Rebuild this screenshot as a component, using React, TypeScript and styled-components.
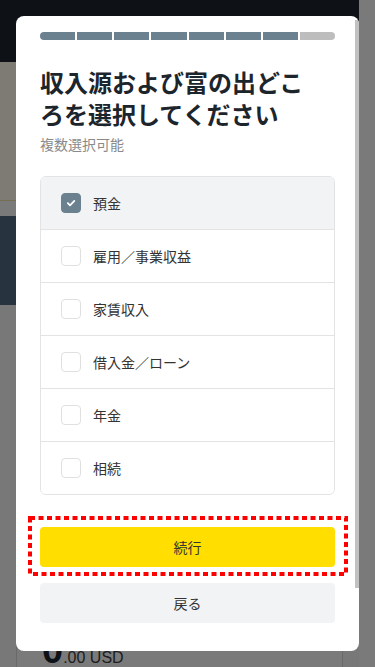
import React, { useState } from 'react';
import styled, { createGlobalStyle } from 'styled-components';

const GlobalStyle = createGlobalStyle`
  html, body {
    margin: 0;
    padding: 0;
  }
  body {
    width: 375px;
    height: 667px;
    overflow: hidden;
    font-family: 'Noto Sans CJK JP', 'Noto Sans', sans-serif;
  }
  * {
    box-sizing: border-box;
  }
`;

const Page = styled.div`
  display: flex;
  width: 375px;
  height: 667px;
  background: #f0f0f0;
  overflow: hidden;
`;

const PageMain = styled.div`
  flex: 1;
  display: flex;
  flex-direction: column;
  min-height: 0;
`;

const PageScrollTrack = styled.div`
  width: 16px;
  flex-shrink: 0;
  background: #f4f4f4;
`;

const Header = styled.div`
  flex-shrink: 0;
  height: 62px;
  background: #1c222a;
`;

const Hero = styled.div`
  flex-shrink: 0;
  height: 139px;
  background: #fcf4e8;
  border-bottom: 1px solid #e9dca6;
`;

const Spacer = styled.div`
  flex-shrink: 0;
  height: 15px;
  background: #f4f4f4;
`;

const Band = styled.div`
  flex-shrink: 0;
  height: 89px;
  background: #4e687e;
`;

const Content = styled.div`
  flex-shrink: 0;
  padding: 16px;
`;

const BalanceCard = styled.div`
  height: 400px;
  border: 1px solid #d4d4d4;
  border-radius: 8px;
  background: #f4f4f4;
  padding: 306px 25px 0;
`;

const Balance = styled.div`
  display: flex;
  align-items: baseline;
  font-family: 'Liberation Sans', Arial, sans-serif;
  color: #3c3c3c;
  font-size: 16px;
  line-height: 44px;
`;

const BalanceMain = styled.span`
  font-size: 38px;
  font-weight: 700;
  color: #1a2230;
`;

const Backdrop = styled.div`
  position: fixed;
  inset: 0;
  background: rgba(0, 0, 0, 0.5);
`;

const Modal = styled.div`
  position: fixed;
  top: 16px;
  left: 16px;
  width: 343px;
  background: #fff;
  border-radius: 8px;
  padding: 16px 24px 28px;
  display: flex;
  flex-direction: column;
  overflow: hidden;
`;

const ModalScrollThumb = styled.div`
  position: absolute;
  top: 4px;
  right: 0;
  width: 4px;
  height: 568px;
  background: #c1c1c1;
`;

const Progress = styled.div`
  display: flex;
  gap: 2px;
  height: 8px;
  border-radius: 4px;
  overflow: hidden;
`;

const Step = styled.div<{ $done: boolean }>`
  flex: 1;
  background: ${({ $done }) => ($done ? '#6b8190' : '#bdbdbd')};
`;

const Title = styled.h1`
  margin: 26px 0 0;
  padding-right: 12px;
  font-size: 24px;
  line-height: 32px;
  font-weight: 700;
  color: #1d252c;
`;

const Subtitle = styled.p`
  margin: 4px 0 0;
  font-size: 14px;
  line-height: 20px;
  color: #8a8a8a;
`;

const OptionList = styled.div`
  margin-top: 22px;
  border: 1px solid #e3e3e3;
  border-radius: 6px;
  overflow: hidden;
`;

const OptionRow = styled.label<{ $checked: boolean }>`
  display: flex;
  align-items: center;
  gap: 12px;
  height: 52px;
  padding: 0 20px;
  background: ${({ $checked }) => ($checked ? '#f2f3f5' : '#fff')};
  cursor: pointer;
  & + & {
    border-top: 1px solid #e3e3e3;
    height: 53px;
  }
`;

const Box = styled.span<{ $checked: boolean }>`
  display: flex;
  align-items: center;
  justify-content: center;
  width: 20px;
  height: 20px;
  border-radius: 4px;
  border: 1px solid ${({ $checked }) => ($checked ? '#6b8190' : '#e0e0e0')};
  background: ${({ $checked }) => ($checked ? '#6b8190' : '#fff')};
  flex-shrink: 0;
`;

const OptionText = styled.span`
  font-size: 14px;
  line-height: 20px;
  color: #333;
`;

const Highlight = styled.div`
  position: relative;
  margin: 21px -13px 0 -12px;
  padding: 11px 13px 9px 12px;
`;

const HighlightFrame = styled.svg`
  position: absolute;
  top: 0;
  left: 0;
  pointer-events: none;
`;

const Button = styled.button<{ $primary?: boolean }>`
  display: block;
  width: 100%;
  height: 40px;
  border: none;
  border-radius: 4px;
  font-family: inherit;
  font-size: 14px;
  color: #333;
  background: ${({ $primary }) => ($primary ? '#ffde00' : '#f2f3f5')};
  cursor: pointer;
`;

const BackButton = styled(Button)`
  margin-top: 7px;
`;

const options = ['預金', '雇用／事業収益', '家賃収入', '借入金／ローン', '年金', '相続'];

const Check = () => (
  <svg width="20" height="20" viewBox="0 0 20 20">
    <path d="M6.5 10.2l2.4 2.4 4.8-5" fill="none" stroke="#fff" strokeWidth="2" strokeLinecap="round" strokeLinejoin="round" />
  </svg>
);

const App = () => {
  const [selected, setSelected] = useState<string[]>(['預金']);

  const toggle = (name: string) =>
    setSelected((prev) => (prev.includes(name) ? prev.filter((n) => n !== name) : [...prev, name]));

  return (
    <>
      <GlobalStyle />
      <Page>
        <PageMain>
          <Header />
          <Hero />
          <Spacer />
          <Band />
          <Content>
            <BalanceCard>
              <Balance>
                <BalanceMain>0</BalanceMain>.00 USD
              </Balance>
            </BalanceCard>
          </Content>
        </PageMain>
        <PageScrollTrack />
      </Page>
      <Backdrop />
      <Modal>
        <ModalScrollThumb />
        <Progress>
          {Array.from({ length: 8 }).map((_, i) => (
            <Step key={i} $done={i < 7} />
          ))}
        </Progress>
        <Title>収入源および富の出どころを選択してください</Title>
        <Subtitle>複数選択可能</Subtitle>
        <OptionList>
          {options.map((name) => {
            const checked = selected.includes(name);
            return (
              <OptionRow key={name} $checked={checked} onClick={() => toggle(name)}>
                <Box $checked={checked}>{checked && <Check />}</Box>
                <OptionText>{name}</OptionText>
              </OptionRow>
            );
          })}
        </OptionList>
        <Highlight>
          <HighlightFrame width="320" height="60" viewBox="0 0 320 60">
            <rect x="2" y="2" width="316" height="56" fill="none" stroke="#ff0000" strokeWidth="4" strokeDasharray="5 3.5" />
          </HighlightFrame>
          <Button $primary>続行</Button>
        </Highlight>
        <BackButton>戻る</BackButton>
      </Modal>
    </>
  );
};

export default App;
